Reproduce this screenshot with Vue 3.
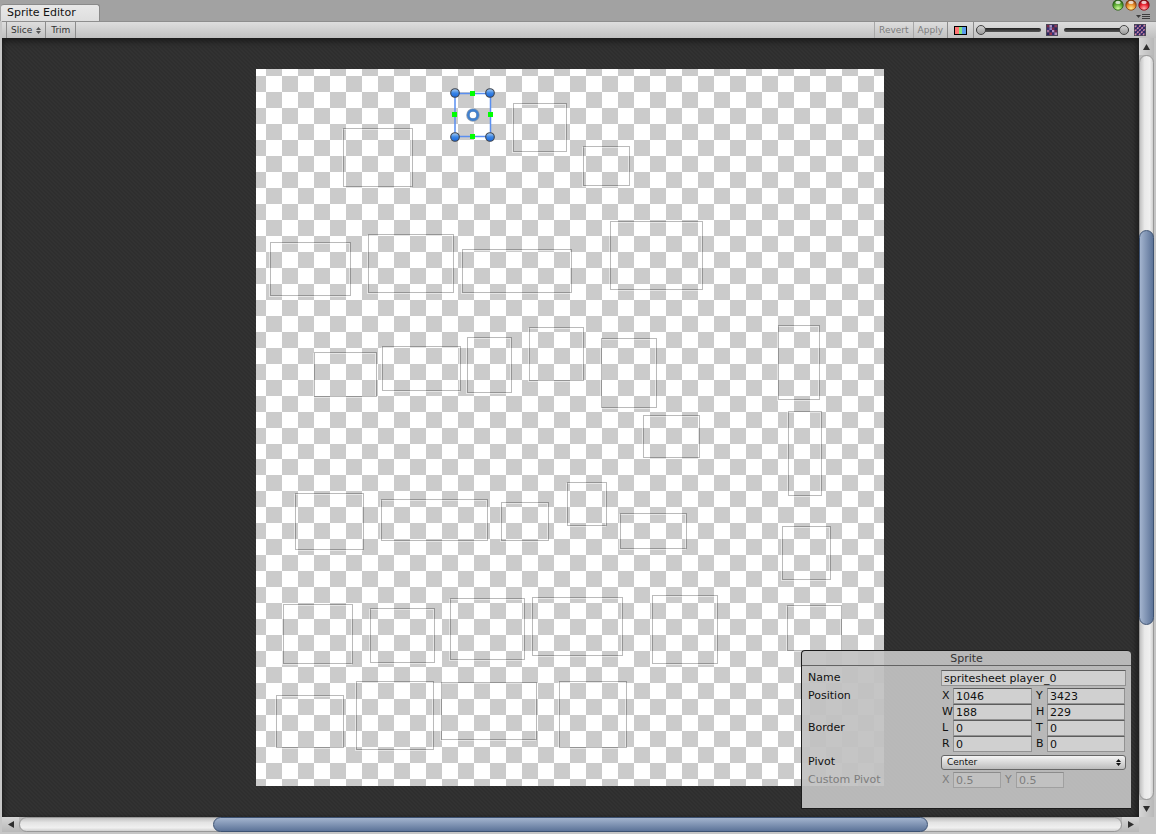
<script setup>
import { ref } from 'vue'

const zoom = ref(0)
const mip = ref(100)
const name = ref('spritesheet player_0')
const pivot = ref('Center')
const fields = ref([
  { id: 'pos-x', label: 'X', value: '1046' },
  { id: 'pos-y', label: 'Y', value: '3423' },
  { id: 'pos-w', label: 'W', value: '188' },
  { id: 'pos-h', label: 'H', value: '229' },
  { id: 'bor-l', label: 'L', value: '0' },
  { id: 'bor-t', label: 'T', value: '0' },
  { id: 'bor-r', label: 'R', value: '0' },
  { id: 'bor-b', label: 'B', value: '0' },
])

// Slice bounds on the sheet: left, top, right, bottom
const slices = [
  [87, 59, 156, 117], [257, 34, 310, 82], [327, 77, 373, 116],
  [14, 173, 94, 226], [112, 165, 197, 223], [206, 180, 315, 223],
  [354, 152, 446, 220], [58, 283, 120, 327], [126, 277, 204, 321],
  [211, 268, 255, 323], [273, 258, 327, 311], [345, 269, 400, 338],
  [522, 256, 563, 330], [387, 346, 443, 388], [532, 342, 565, 426],
  [39, 424, 107, 480], [125, 430, 231, 471], [245, 433, 292, 471],
  [311, 413, 350, 456], [364, 444, 430, 479], [526, 457, 574, 510],
  [27, 535, 96, 594], [114, 539, 178, 593], [194, 529, 268, 590],
  [276, 528, 366, 586], [396, 526, 461, 594], [531, 536, 585, 581],
  [20, 626, 87, 678], [100, 612, 177, 680], [185, 613, 280, 670],
  [303, 612, 370, 678],
]
const corners = [[199, 24], [234, 24], [199, 68], [234, 68]]
const edges = [[214, 22], [214, 65], [196, 43], [232, 43]]
const lights = [
  { id: 'green', label: 'Maximize', light: '#d3ff9f', mid: '#5fae35', dark: '#265b14' },
  { id: 'amber', label: 'Minimize', light: '#fff08a', mid: '#e98a2c', dark: '#7d3a0c' },
  { id: 'red', label: 'Close', light: '#ffb3b3', mid: '#e8202f', dark: '#7d0710' },
]
const coarse = ['#7b2a4a', '#a893c8', '#2b2560', '#8d3a5c', '#3a2f78', '#8d7fc0', '#7d2748', '#2b2560', '#a06a98', '#2b2560', '#b694c4', '#6a2850', '#2a2460', '#9a3550', '#37307a', '#b48cba']
</script>

<template>
  <div class="window">
    <header class="tabbar">
      <button class="tab">Sprite Editor</button>
      <div class="chrome">
        <div class="lights">
          <button v-for="l in lights" :key="l.id" :aria-label="l.label">
            <svg width="12" height="12" viewBox="0 0 12 12">
              <defs>
                <radialGradient :id="'g-' + l.id" cx="50%" cy="85%" r="80%">
                  <stop offset="0" :stop-color="l.light" />
                  <stop offset="0.55" :stop-color="l.mid" />
                  <stop offset="1" :stop-color="l.dark" />
                </radialGradient>
              </defs>
              <circle cx="6" cy="6" r="5.2" :fill="`url(#g-${l.id})`" :stroke="l.dark" stroke-width="0.8" />
              <ellipse cx="6" cy="3.4" rx="2.7" ry="1.7" fill="#fff" opacity="0.75" />
            </svg>
          </button>
        </div>
        <button class="menu" aria-label="Tab menu">
          <svg width="14" height="6" viewBox="0 0 14 6">
            <path d="M0 1h5L2.500 4z" fill="#3c3c3c" />
            <path d="M6 .5h8M6 2.500h8M6 4.500h8" stroke="#3c3c3c" />
          </svg>
        </button>
      </div>
    </header>

    <div class="toolbar">
      <button class="tool slice">Slice
        <svg width="5" height="7" viewBox="0 0 5 7"><path d="M0 3 2.500 0 5 3zM0 4h5L2.500 7z" fill="#555" /></svg>
      </button>
      <button class="tool trim">Trim</button>
      <span class="spacer"></span>
      <button class="tool off first" disabled>Revert</button>
      <button class="tool off" disabled>Apply</button>
      <button class="tool rgb" aria-label="Show alpha">
        <svg width="13" height="9" viewBox="0 0 13 9">
          <rect width="13" height="9" fill="#000" />
          <rect x="1" y="1" width="4" height="7" fill="#ff7474" />
          <rect x="5" y="1" width="3" height="7" fill="#82e682" />
          <rect x="8" y="1" width="4" height="7" fill="#5a9cec" />
        </svg>
      </button>
      <input v-model="zoom" class="slider" type="range" aria-label="Zoom" />
      <svg class="mip" width="12" height="12" viewBox="0 0 12 12">
        <rect width="12" height="12" fill="#4c4658" />
        <rect v-for="(c, i) in coarse" :key="i" :x="1 + (i % 4) * 2.500" :y="1 + Math.floor(i / 4) * 2.500" width="2.500" height="2.500" :fill="c" />
      </svg>
      <input v-model="mip" class="slider" type="range" aria-label="Mip level" />
      <svg class="mip" width="12" height="12" viewBox="0 0 12 12">
        <rect width="12" height="12" fill="#4c4658" />
        <rect x="1" y="1" width="10" height="10" fill="#2c2768" />
        <path d="M1 3l2-2M1 7l6-6M1 11 11 1M5 11l6-6M9 11l2-2" stroke="#d58aa6" stroke-width="1.500" stroke-dasharray="2 1" />
      </svg>
    </div>

    <main class="work">
      <div class="stage">
        <div class="sheet">
          <svg width="628" height="717" viewBox="0 0 628 717">
            <defs>
              <linearGradient id="knob" x1="0" y1="0" x2="0" y2="1">
                <stop offset="0" stop-color="#b4d2f2" />
                <stop offset="0.5" stop-color="#3a86e6" />
                <stop offset="1" stop-color="#1a66dc" />
              </linearGradient>
            </defs>
            <g v-for="(s, i) in slices" :key="i" fill="none">
              <rect :x="s[0] - 0.5" :y="s[1] + 1.5" :width="s[2] - s[0]" :height="s[3] - s[1]" stroke="#fff" stroke-opacity="0.5" />
              <rect :x="s[0] + 0.5" :y="s[1] + 0.5" :width="s[2] - s[0]" :height="s[3] - s[1]" stroke="#000" stroke-opacity="0.27" />
            </g>
            <rect x="199" y="24.500" width="35.500" height="43" fill="none" stroke="#5a8ff0" stroke-width="1.500" />
            <circle v-for="(c, i) in corners" :key="'c' + i" :cx="c[0]" :cy="c[1]" r="4.300" fill="url(#knob)" stroke="#3b434f" stroke-width="1.100" />
            <rect v-for="(e, i) in edges" :key="'e' + i" :x="e[0]" :y="e[1]" width="5" height="5" fill="#0f0" />
            <circle cx="217" cy="46" r="5" fill="#fff" stroke="#94a0ae" stroke-width="3.600" />
            <circle cx="217" cy="46" r="4.800" fill="none" stroke="#3f80d0" stroke-width="2.400" />
          </svg>
        </div>

        <form class="panel" @submit.prevent>
          <h2>Sprite</h2>
          <div class="body">
            <div class="line">
              <label for="name">Name</label>
              <input id="name" v-model="name" type="text" />
            </div>
            <div class="group">
              <div class="names"><span>Position</span><span>Border</span></div>
              <div class="pairs">
                <div v-for="f in fields" :key="f.id" class="pair">
                  <label :for="f.id">{{ f.label }}</label>
                  <input :id="f.id" v-model="f.value" type="text" />
                </div>
              </div>
            </div>
            <div class="line">
              <label for="pivot">Pivot</label>
              <div class="drop">
                <select id="pivot" v-model="pivot">
                  <option>Center</option>
                  <option>Custom</option>
                </select>
                <svg width="5" height="7" viewBox="0 0 5 7"><path d="M0 3 2.500 0 5 3zM0 4h5L2.500 7z" fill="#111" /></svg>
              </div>
            </div>
            <div class="line disabled">
              <span>Custom Pivot</span>
              <div class="custom">
                <div class="pair">
                  <label for="cpx">X</label><input id="cpx" type="text" value="0.5" disabled />
                </div>
                <div class="pair">
                  <label for="cpy">Y</label><input id="cpy" type="text" value="0.5" disabled />
                </div>
              </div>
            </div>
          </div>
        </form>
      </div>

      <div class="bar vertical">
        <button aria-label="Scroll up"><svg width="7" height="6" viewBox="0 0 7 6"><path d="M0 6 3.500 0 7 6z" fill="#2e2e2e" /></svg></button>
        <div class="track"><i class="before"></i><div class="thumb"></div><i class="after"></i></div>
        <button aria-label="Scroll down"><svg width="7" height="6" viewBox="0 0 7 6"><path d="M0 0h7L3.500 6z" fill="#2e2e2e" /></svg></button>
      </div>
      <div class="bar horizontal">
        <button aria-label="Scroll left"><svg width="6" height="7" viewBox="0 0 6 7"><path d="M6 0v7L0 3.500z" fill="#2e2e2e" /></svg></button>
        <div class="track"><i class="before"></i><div class="thumb"></div><i class="after"></i></div>
        <button aria-label="Scroll right"><svg width="6" height="7" viewBox="0 0 6 7"><path d="M0 0v7l6-3.500z" fill="#2e2e2e" /></svg></button>
      </div>
    </main>
  </div>
</template>

<style>
body { background: #a2a2a2; }
</style>

<style scoped>
* { box-sizing: border-box; }
.window {
  height: 100vh;
  display: flex;
  flex-direction: column;
  padding: 0 2px 2px;
  background: #c6c6c6;
  color: #111;
  font: 11px/16px "DejaVu Sans", "Noto Sans", sans-serif;
  overflow: hidden;
}
button, input, select { font: inherit; color: inherit; margin: 0; padding: 0; border: 0; background: none; border-radius: 0; outline: 0; }
svg { display: block; flex: none; }

.tabbar { display: flex; justify-content: space-between; height: 21px; margin: 0 -2px; padding-left: 1px; background: #a2a2a2; flex: none; }
.tab { align-self: flex-end; height: 17px; width: 99px; padding-left: 6px; text-align: left; line-height: 16px; background: linear-gradient(#e8e8e8, #dedede); border: solid #8a8a8a; border-width: 1px 1px 0 0; border-radius: 3px 3px 0 0; }
.chrome { display: flex; flex-direction: column; align-items: flex-end; padding: 0 6px 0 0; gap: 4px; }
.lights { display: flex; gap: 1px; margin-top: -1px; }
.lights button { height: 11px; }
.menu { height: 6px; }

.toolbar { display: flex; align-items: center; height: 17px; flex: none; background: linear-gradient(#dedede, #c0c0c0); border-top: 1px solid #8e8e8e; padding-left: 4px; margin-right: -2px; padding-right: 10px; font-size: 9px; }
.tool { height: 16px; padding: 0 4px; border-right: 1px solid #8c8c8c; line-height: 16px; color: #333; white-space: nowrap; display: flex; align-items: center; }
.slice { gap: 4px; border-left: 1px solid #8c8c8c; }
.trim { padding: 0 5px; }
.off { color: #7c7c7c; border-color: #a8a8a8; }
.first { border-left: 1px solid #a8a8a8; }
.off + .rgb { border-left: 1px solid #8c8c8c; margin-left: -1px; }
.rgb { padding: 0 6px; }
.spacer { flex: 1; }
.slider { appearance: none; width: 65px; height: 12px; margin: 0 5px 0 2px; }
.slider::-webkit-slider-runnable-track { height: 4px; border-radius: 2px; background: linear-gradient(#222, #555); }
.slider::-webkit-slider-thumb { appearance: none; width: 10px; height: 10px; margin-top: -3px; border-radius: 50%; border: 1px solid #444; background: linear-gradient(#d2d2d2, #9a9a9a); }
.mip { margin: 0 4px 0 0; }
.mip:last-child { margin-right: 0; }

.work { flex: 1; min-height: 0; display: grid; grid-template-columns: 1fr 15px; grid-template-rows: 1fr 15px; }
.stage {
  position: relative; display: flex; align-items: center; justify-content: center; overflow: hidden; padding-right: 1px;
  background: linear-gradient(45deg, #2e2e2e 25%, #323232 25% 50%, #2e2e2e 50% 75%, #323232 75%) 0 0 / 4px 4px;
  box-shadow: inset 0 5px 7px -2px #1a1a1a, inset 3px 0 5px -3px #1a1a1a, inset -4px 0 6px -3px #1a1a1a;
}
.sheet { position: relative; background: repeating-conic-gradient(#cbcbcb 0 25%, #fff 0 50%) 10px 7px / 32px 32px; }
.sheet::before { content: ""; position: absolute; inset: 390px 0 0; background: repeating-conic-gradient(#cbcbcb 0 25%, #fff 0 50%) 10px 0 / 32px 32px; }
.sheet svg { position: relative; }

.panel { position: absolute; right: 8px; bottom: 8px; width: 330px; border: 1px solid #1c1c1c; border-right: 0; border-radius: 4px 4px 0 0; background: rgba(193, 193, 193, .942); }
h2 { margin: 0; font: inherit; line-height: 16px; height: 15px; text-align: center; color: #333; border-bottom: 1px solid #636363; }
.body { padding: 4px 5px 20px 6px; display: flex; flex-direction: column; gap: 2px; }
.line, .group { display: grid; grid-template-columns: 133px 1fr; align-items: center; }
.group { align-items: start; }
.names { display: grid; grid-auto-rows: 32px; }
.pairs { display: grid; grid-template-columns: 91px 90px; column-gap: 3px; grid-auto-rows: 16px; }
.pair { display: flex; }
.pair label { width: 12px; padding-left: 1px; flex: none; }
.panel input { display: block; width: 100%; min-width: 0; height: 16px; line-height: 14px; padding: 0 2px; background: #d0d0d0; border: 1px solid #929292; border-top-color: #5c5c5c; }
.drop { position: relative; }
.drop select { appearance: none; display: block; width: 100%; height: 15px; padding-left: 5px; font-size: 9px; line-height: 13px; border: 1px solid #666; border-radius: 3px; background: linear-gradient(#f4f4f4, #bcbcbc); }
.drop svg { position: absolute; right: 5px; top: 4px; pointer-events: none; }
.disabled { color: #7d7d7d; }
.panel .disabled input { background: #c1c1c1; border-color: #a0a0a0; border-top-color: #8c8c8c; }
.custom { display: grid; grid-template-columns: 60px 60px; column-gap: 3px; }

.bar { display: flex; background: #b9b9b9; }
.bar button { display: grid; place-items: center; flex: none; width: 17px; height: 15px; background: linear-gradient(#d6d6d6, #b8b8b8); }
.bar .track { flex: 1; display: flex; min-width: 0; min-height: 0; border-radius: 8px; border: 1px solid #989898; }
.before { flex: 194; }
.thumb { flex: 714; border: 1px solid #3d5272; border-radius: 8px; margin: -1px 0; }
.after { flex: 194; }
.vertical { flex-direction: column; }
.vertical button { width: 15px; height: 17px; background: linear-gradient(90deg, #d6d6d6, #b8b8b8); }
.vertical .track { flex-direction: column; background: linear-gradient(90deg, #c2c2c2, #e9e9e9 35%, #f0f0f0 75%, #cfcfcf); }
.vertical .before { flex: 175; }
.vertical .thumb { flex: 395; margin: 0 -1px; background: linear-gradient(90deg, #a3b4ce, #5c7398); }
.vertical .after { flex: 175; }
.horizontal .track { background: linear-gradient(#c2c2c2, #e4e4e4 35%, #f0f0f0 75%, #cfcfcf); }
.horizontal .thumb { background: linear-gradient(#a3b4ce, #5c7398); }
</style>
